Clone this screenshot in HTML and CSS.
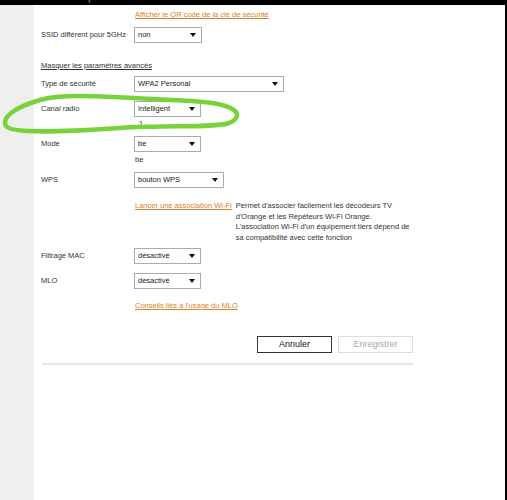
FILE: index.html
```html
<!DOCTYPE html>
<html lang="fr">
<head>
<meta charset="utf-8">
<link rel="stylesheet" href="styles.css">
</head>
<body>
<div class="topbar"><div class="topbar-text">Wi-Fi 2,4 GHz</div></div>
<div class="frame">
  <div class="sidebar"></div>
  <div class="main">
    <div class="content">
      <div class="row r-qr"><div class="label"></div><div class="field"><a class="link">Afficher le QR code de la clé de sécurité</a></div></div>
      <div class="row r-ssid"><div class="label">SSID différent pour 5GHz</div><div class="field"><div class="select w68">non<span class="arrow"></span></div></div></div>
      <div class="r-masquer"><a class="darklink">Masquer les paramètres avancés</a></div>
      <div class="row r-type"><div class="label">Type de sécurité</div><div class="field"><div class="select w150">WPA2 Personal<span class="arrow"></span></div></div></div>
      <div class="row r-canal"><div class="label">Canal radio</div><div class="field"><div class="select w67">Intelligent<span class="arrow"></span></div><div class="sub sub-one">1</div></div></div>
      <div class="row r-mode"><div class="label">Mode</div><div class="field"><div class="select w67">be<span class="arrow"></span></div><div class="sub">be</div></div></div>
      <div class="row r-wps"><div class="label">WPS</div><div class="field"><div class="select w90">bouton WPS<span class="arrow"></span></div></div></div>
      <div class="row r-lancer"><div class="label"></div><div class="field assoc"><a class="link">Lancer une association Wi-Fi</a><p class="desc">Permet d'associer facilement les décodeurs TV<br>d'Orange et les Répéteurs Wi-Fi Orange.<br>L'association Wi-Fi d'un équipement tiers dépend de<br>sa compatibilité avec cette fonction</p></div></div>
      <div class="row r-mac"><div class="label">Filtrage MAC</div><div class="field"><div class="select w67">désactivé<span class="arrow"></span></div></div></div>
      <div class="row r-mlo"><div class="label">MLO</div><div class="field"><div class="select w67">désactivé<span class="arrow"></span></div></div></div>
      <div class="row r-conseils"><div class="label"></div><div class="field"><a class="link">Conseils liés à l'usage du MLO</a></div></div>
      <div class="buttons"><button class="btn btn-cancel">Annuler</button><button class="btn btn-save">Enregistrer</button></div>
      <div class="rule"></div>
    </div>
  </div>
  <div class="rightedge"></div>
</div>
<svg class="scribble" width="507" height="500" viewBox="0 0 507 500" xmlns="http://www.w3.org/2000/svg">
  <path d="M236 112 C226 100 185 101 133 98 C95 96 60 94 40 100 C16 107 1 117 6 126 C12 134 60 132 120 128 C170 125 214 128 229 123 C237 120 238 115 236 112" fill="none" stroke="#78d23a" stroke-width="4.5" stroke-linecap="round" stroke-linejoin="round"/>
</svg>
</body>
</html>
```
FILE: styles.css
```css
html, body {
  margin: 0;
  padding: 0;
  background: #fff;
}
body {
  font-family: "Liberation Sans", Arial, sans-serif;
  font-size: 7.5px;
  color: #333;
  width: 507px;
  height: 500px;
  overflow: hidden;
  position: relative;
}
.topbar {
  height: 5px;
  background: #000;
  overflow: hidden;
}
.topbar-text {
  margin-top: -17px;
  margin-left: 16px;
  font-size: 20px;
  line-height: 20px;
  color: #8a8a8a;
  letter-spacing: 1px;
}
.frame {
  display: flex;
  height: 495px;
}
.sidebar {
  width: 34px;
  background: #efefef;
  flex: none;
}
.main {
  flex: 1;
  background: #fff;
}
.rightedge {
  width: 2px;
  background: #000;
  flex: none;
}
.content {
  margin-left: 7px;
  width: 372px;
  display: flex;
  flex-direction: column;
}
.row {
  display: grid;
  grid-template-columns: 93px 1fr;
  align-items: start;
}
.label {
  line-height: 16px;
  white-space: nowrap;
}
.field {
  display: flex;
  flex-direction: column;
  align-items: flex-start;
}
.link {
  color: #d9822b;
  text-decoration: underline;
  line-height: 10px;
  white-space: nowrap;
  margin-left: 1px;
}
.darklink {
  color: #333;
  text-decoration: underline;
  line-height: 10px;
}
.select {
  box-sizing: border-box;
  height: 16px;
  border: 1px solid #ababab;
  background: #fff;
  padding-left: 3px;
  line-height: 14px;
  position: relative;
  color: #222;
}
.arrow {
  position: absolute;
  right: 5px;
  top: 5px;
  width: 0;
  height: 0;
  border-left: 3.5px solid transparent;
  border-right: 3.5px solid transparent;
  border-top: 4px solid #111;
}
.w67 { width: 67px; }
.w68 { width: 68px; }
.w90 { width: 90px; }
.w150 { width: 150px; }
.sub {
  line-height: 10px;
  margin-top: 3px;
  margin-left: 1px;
}
.sub-one {
  margin-left: 5px;
  margin-top: 2px;
}
.r-qr { margin-top: 5px; }
.r-ssid { margin-top: 7px; }
.r-masquer { margin-top: 18px; line-height: 10px; }
.r-type { margin-top: 5px; }
.r-canal { margin-top: 9px; }
.r-mode { margin-top: 7px; }
.r-wps { margin-top: 7px; }
.r-lancer { margin-top: 13px; }
.r-mac { margin-top: 5px; }
.r-mlo { margin-top: 9px; }
.r-conseils { margin-top: 12px; }
.assoc {
  flex-direction: row;
  align-items: flex-start;
  gap: 4px;
}
.desc {
  margin: 0;
  line-height: 10.5px;
  white-space: nowrap;
}
.buttons {
  display: flex;
  justify-content: flex-end;
  gap: 6px;
  margin-top: 25px;
}
.btn {
  box-sizing: border-box;
  width: 75px;
  height: 17px;
  padding: 0;
  font-family: "Liberation Sans", Arial, sans-serif;
  font-size: 9px;
  background: #fff;
  line-height: 15px;
}
.btn-cancel {
  border: 1px solid #333;
  color: #111;
}
.btn-save {
  border: 1px solid #dcdcdc;
  color: #a8a8a8;
}
.rule {
  height: 2px;
  background: #e6e6e6;
  margin-top: 10px;
  margin-left: 1px;
}
.scribble {
  position: absolute;
  left: 0;
  top: 0;
  pointer-events: none;
}
```
